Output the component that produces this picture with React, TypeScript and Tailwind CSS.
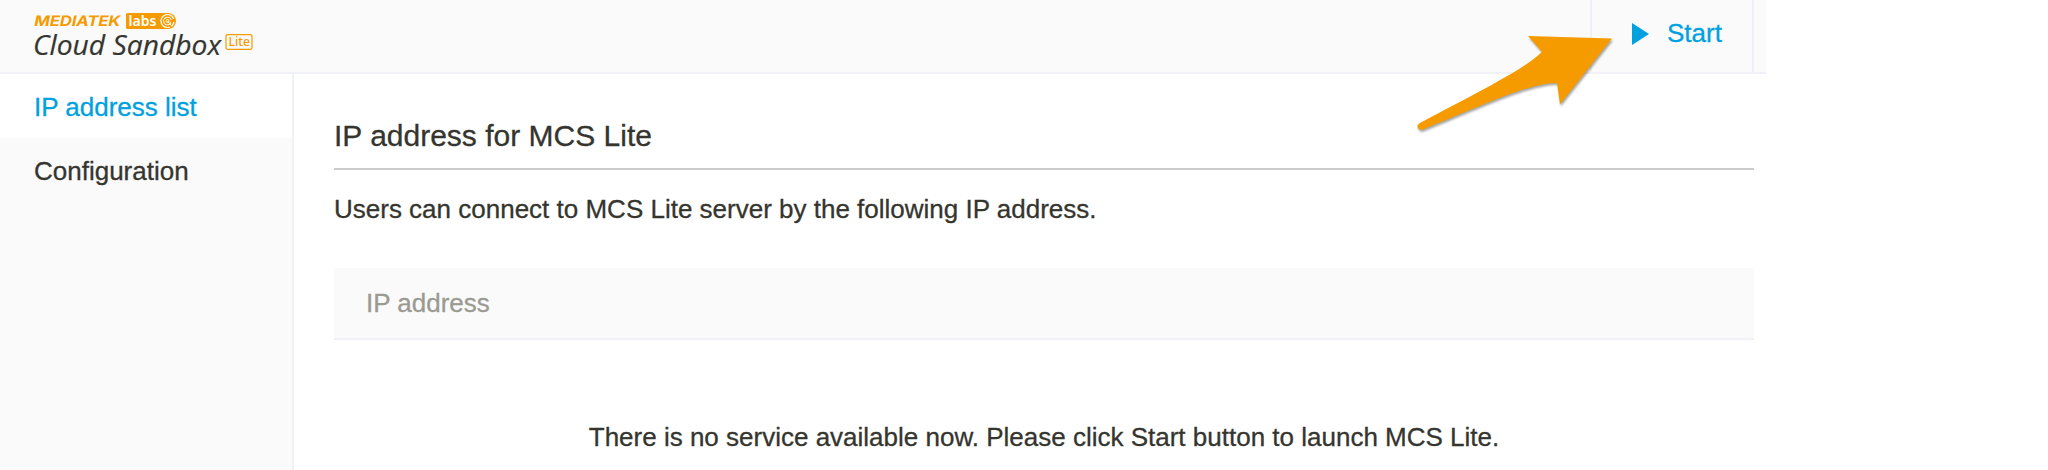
function Logo() {
  return (
    <svg className="block h-[72px] w-[260px] shrink-0 [-webkit-text-stroke:0]" viewBox="0 0 260 72" role="img" aria-label="MediaTek Labs Cloud Sandbox Lite">
      <text x="0" y="26" fontFamily="Inter, sans-serif" fontWeight="700" fontSize="14.5" fill="#f59b00" textLength="86" lengthAdjust="spacingAndGlyphs" transform="translate(34 0) skewX(-12) translate(5 0)">MEDIATEK</text>
      <path d="M127.500 13H168A8 8 0 0 1 168 29H127.500A1.500 1.500 0 0 1 126 27.500V14.500A1.500 1.500 0 0 1 127.500 13Z" fill="#f59b00" />
      <text x="128.500" y="26" fontFamily="'Noto Sans', sans-serif" fontWeight="600" fontSize="15" fill="#fff" textLength="28" lengthAdjust="spacingAndGlyphs">labs</text>
      <g fill="none" stroke="#fff">
        <circle cx="167.500" cy="21" r="6.500" strokeWidth="1.200" strokeDasharray="30 3 4 4" transform="rotate(70 167.500 21)" />
        <circle cx="167.500" cy="21" r="3.800" strokeWidth="1" strokeDasharray="18 2" transform="rotate(70 167.500 21)" />
        <circle cx="167.500" cy="21" r="1.500" strokeWidth="0.900" />
        <path d="M167.500 21L172 26.500" strokeWidth="1" />
      </g>
      <text x="33" y="54.500" fontFamily="'Open Sans', sans-serif" fontStyle="italic" fontSize="27" fill="#35352f" stroke="#35352f" strokeWidth="0.200" textLength="188" lengthAdjust="spacingAndGlyphs">Cloud Sandbox</text>
      <rect x="226" y="34.700" width="26" height="14.600" rx="1.500" fill="none" stroke="#f59b00" strokeWidth="1.200" />
      <text x="228.500" y="46" fontFamily="'Noto Sans', sans-serif" fontWeight="500" fontSize="12.5" fill="#f59b00" textLength="21.500" lengthAdjust="spacingAndGlyphs">Lite</text>
    </svg>
  );
}

function Pointer() {
  return (
    <svg className="pointer-events-none absolute top-0 left-[1400px] h-[150px] w-[230px] drop-shadow-[1px_2px_1px_rgba(0,0,0,0.35)]" viewBox="0 0 230 150" aria-hidden="true">
      <path d="M128 36L212 38.500L160 104.500L157 83C128 83 82 106 23 129.500C18 131.500 15 125.500 20 123C78 92 120 72 142 52Z" fill="#f59b00" />
    </svg>
  );
}

export default function App() {
  return (
    <div className="relative h-[470px] w-full overflow-hidden bg-white font-['Liberation_Sans',Arial,sans-serif] text-[26px] leading-[30px] text-[#35352f] [-webkit-text-stroke:0.3px]">
      <div className="flex h-full w-[1766px] flex-col">
        <header className="flex h-[74px] shrink-0 justify-between border-b-2 border-[#f0f0f7] bg-[#fafafa]">
          <Logo />
          <div className="mr-3 flex w-[164px] items-center border-x-2 border-[#f0f0f7] pb-1 pl-10 text-[#00a1de]">
            <svg className="mr-[17px] h-[22px] w-[18px]" viewBox="0 0 18 22" aria-hidden="true">
              <path d="M0 0L17 11L0 22Z" fill="#00a1de" />
            </svg>
            <button className="pb-[2px] whitespace-nowrap">Start</button>
          </div>
        </header>
        <div className="flex min-h-0 flex-1">
          <nav className="w-[294px] shrink-0 border-r-2 border-[#f0f0f7] bg-[#fafafa]">
            <a className="flex h-16 items-center bg-white pt-[2px] pl-[34px] text-[#00a1de]">IP address list</a>
            <a className="flex h-16 items-center pt-[2px] pl-[34px]">Configuration</a>
          </nav>
          <main className="min-w-0 flex-1 pr-3 pl-10">
            <h1 className="mt-10 h-14 border-b-2 border-[#ccc] pt-[2px] text-[30px] leading-10">IP address for MCS Lite</h1>
            <p className="mt-6">Users can connect to MCS Lite server by the following IP address.</p>
            <div className="mt-11 flex h-[72px] items-center border-b-2 border-[#f0f0f7] bg-[#fafafa] pl-8 text-[#9a9a92]">IP address</div>
            <p className="mt-[82px] text-center whitespace-nowrap">There is no service available now. Please click Start button to launch MCS Lite.</p>
          </main>
        </div>
      </div>
      <Pointer />
    </div>
  );
}
